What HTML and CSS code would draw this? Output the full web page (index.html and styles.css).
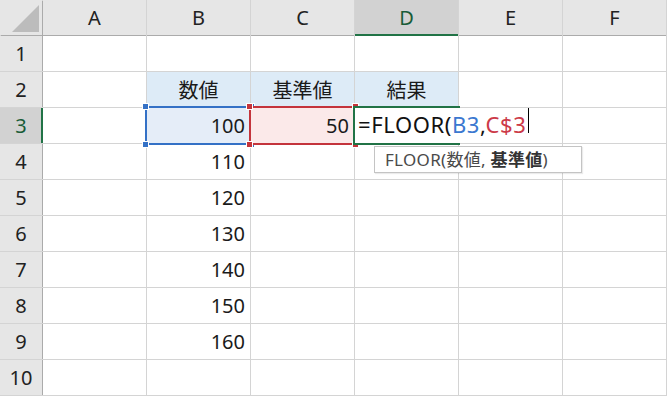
FILE: index.html
```html
<!DOCTYPE html>
<html lang="ja">
<head>
    <meta charset="utf-8" />
    <link rel="stylesheet" href="styles.css">
    <title>FLOOR</title>
</head>
<body>
    <div class="sheet">
        <div class="corner"><span class="tri"></span></div>
        <div class="colhead">A</div>
        <div class="colhead">B</div>
        <div class="colhead">C</div>
        <div class="colhead sel">D</div>
        <div class="colhead">E</div>
        <div class="colhead">F</div>

        <div class="rowhead">1</div>
        <div class="cell"></div><div class="cell"></div><div class="cell"></div><div class="cell"></div><div class="cell"></div><div class="cell"></div>

        <div class="rowhead">2</div>
        <div class="cell"></div>
        <div class="cell label">数値</div>
        <div class="cell label">基準値</div>
        <div class="cell label">結果</div>
        <div class="cell"></div><div class="cell"></div>

        <div class="rowhead sel">3</div>
        <div class="cell"></div>
        <div class="cell num ref ref-b">100<i class="h tl"></i><i class="h tr"></i><i class="h bl"></i><i class="h br"></i></div>
        <div class="cell num ref ref-c">50<i class="h tl"></i><i class="h tr"></i><i class="h bl"></i><i class="h br"></i></div>
        <div class="cell edit">
            <span class="formula">=FLOOR(<span class="arg-b">B3</span>,<span class="arg-c">C$3</span></span><span class="caret"></span>
            <div class="tip">FLOOR(数値, <b>基準値</b>)</div>
        </div>
        <div class="cell"></div>

        <div class="rowhead">4</div>
        <div class="cell"></div><div class="cell num">110</div><div class="cell"></div><div class="cell"></div><div class="cell"></div><div class="cell"></div>
        <div class="rowhead">5</div>
        <div class="cell"></div><div class="cell num">120</div><div class="cell"></div><div class="cell"></div><div class="cell"></div><div class="cell"></div>
        <div class="rowhead">6</div>
        <div class="cell"></div><div class="cell num">130</div><div class="cell"></div><div class="cell"></div><div class="cell"></div><div class="cell"></div>
        <div class="rowhead">7</div>
        <div class="cell"></div><div class="cell num">140</div><div class="cell"></div><div class="cell"></div><div class="cell"></div><div class="cell"></div>
        <div class="rowhead">8</div>
        <div class="cell"></div><div class="cell num">150</div><div class="cell"></div><div class="cell"></div><div class="cell"></div><div class="cell"></div>
        <div class="rowhead">9</div>
        <div class="cell"></div><div class="cell num">160</div><div class="cell"></div><div class="cell"></div><div class="cell"></div><div class="cell"></div>
        <div class="rowhead">10</div>
        <div class="cell"></div><div class="cell"></div><div class="cell"></div><div class="cell"></div><div class="cell"></div><div class="cell"></div>
    </div>
</body>
</html>
```

FILE: styles.css
```css
body {
    margin: 0;
    background: #ffffff;
    font-family: "Noto Sans", "Noto Sans CJK JP", sans-serif;
    color: #1a1a1a;
}

.sheet {
    display: grid;
    grid-template-columns: 42px repeat(6, 103px);
    grid-template-rows: repeat(11, 35px);
    gap: 1px;
    padding-bottom: 1px;
    background: #d4d4d4;
    width: 667px;
    position: relative;
}

.corner,
.colhead,
.rowhead {
    background: #e6e6e6;
    display: flex;
    align-items: center;
    justify-content: center;
    font-size: 20px;
    color: #222;
}

.corner {
    position: relative;
    box-shadow: 1px 1px 0 #ababab;
}

    .corner .tri {
        position: absolute;
        left: 12px;
        top: 5px;
        width: 27px;
        height: 27px;
        background: #bcbcbc;
        clip-path: polygon(100% 0, 100% 100%, 0 100%);
    }

.colhead {
    box-shadow: 0 1px 0 #ababab;
}

.rowhead {
    box-shadow: 1px 0 0 #ababab;
}

    .colhead.sel {
        background: #d2d2d2;
        color: #185c37;
        box-shadow: inset 0 -1px 0 #217346, 0 1px 0 #217346;
    }

    .rowhead.sel {
        background: #d2d2d2;
        color: #185c37;
        box-shadow: inset -1px 0 0 #217346, 1px 0 0 #217346;
    }

.cell {
    background: #ffffff;
    display: flex;
    align-items: center;
    font-size: 20px;
    padding: 0 5px;
    white-space: nowrap;
}

    .cell.label {
        background: #ddebf7;
        justify-content: center;
    }

    .cell.num {
        justify-content: flex-end;
    }

/* range references shown while editing */
.ref {
    position: relative;
}

.ref-b {
    background: #e5edf8;
    outline: 2px solid #3471c6;
}

.ref-c {
    background: #fbe9e9;
    outline: 2px solid #c4343c;
}

.h {
    position: absolute;
    width: 5px;
    height: 5px;
    border: 1px solid #ffffff;
}

.ref-b .h { background: #3471c6; }
.ref-c .h { background: #c4343c; }

.h.tl { left: -5px; top: -5px; }
.h.tr { right: -5px; top: -5px; }
.h.bl { left: -5px; bottom: -5px; }
.h.br { right: -5px; bottom: -5px; }

/* cell in edit mode, text runs over into E3 */
.cell.edit {
    grid-column: span 2;
    position: relative;
    padding-left: 3px;
    font-size: 22px;
    letter-spacing: 0.6px;
    color: #111;
    align-items: center;
}

    /* active cell frame, open on the right where the text spills over */
    .cell.edit::before {
        content: "";
        position: absolute;
        left: -2px;
        top: -2px;
        width: 107px;
        height: 39px;
        box-sizing: border-box;
        border: 2px solid #217346;
        border-right: 0;
    }

.formula {
    position: relative;
    top: -2px;
}

.arg-b { color: #3b78d0; }
.arg-c { color: #cc3a48; }

.caret {
    display: inline-block;
    width: 1px;
    height: 25px;
    background: #000;
    margin-left: 2px;
    align-self: flex-start;
}

.tip {
    position: absolute;
    z-index: 2;
    left: 19px;
    top: 38px;
    width: 208px;
    height: 27px;
    box-sizing: border-box;
    border: 1px solid #c4c4c4;
    background: #ffffff;
    box-shadow: 1px 1px 1px rgba(0, 0, 0, 0.08);
    font-size: 17px;
    letter-spacing: 0.3px;
    color: #4a4a4a;
    padding-left: 10px;
    line-height: 25px;
}

    .tip b {
        color: #333;
    }
```
